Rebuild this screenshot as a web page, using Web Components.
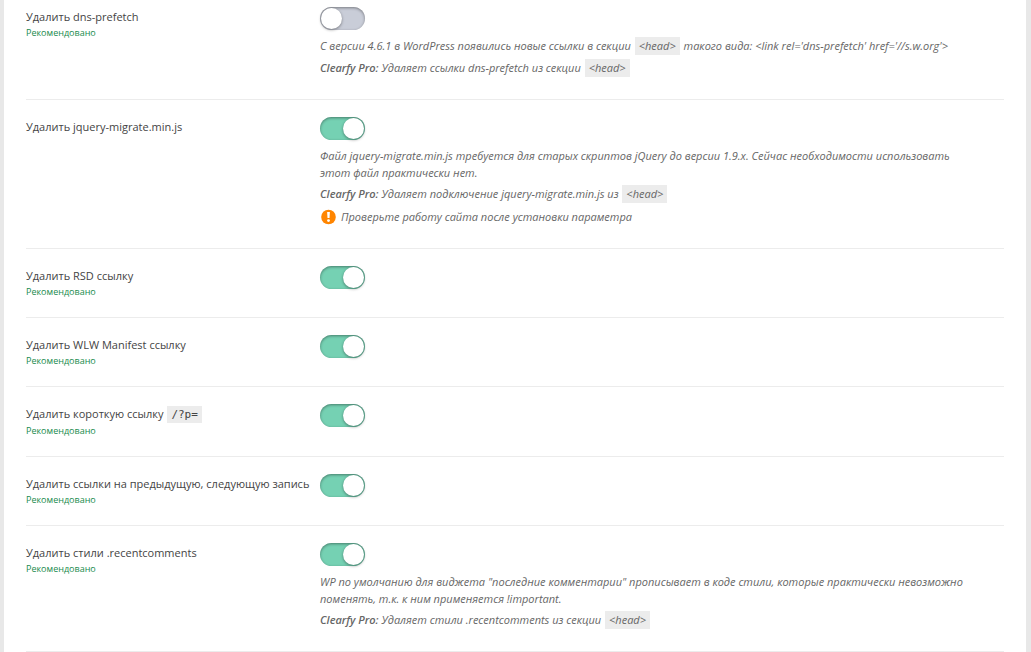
<!DOCTYPE html>
<html lang="ru">
<head>
<meta charset="utf-8">
<meta name="viewport" content="width=device-width, initial-scale=1">
<title>Clearfy Pro</title>
<style>
body {
  margin: 0;
  background: #e8e8e8;
  color: #444;
  font: 11px/17px "Open Sans", "Noto Sans", sans-serif;
}
</style>
</head>
<body>

<settings-panel>
  <setting-row class="first" recommended>
    <span slot="label">Удалить dns-prefetch</span>
    <setting-note>С версии 4.6.1 в WordPress появились новые ссылки в секции <code-chip>&lt;head&gt;</code-chip> такого вида: &lt;link rel='dns-prefetch' href='//s.w.org'&gt;</setting-note>
    <setting-note><b>Clearfy Pro:</b> Удаляет ссылки dns-prefetch из секции <code-chip>&lt;head&gt;</code-chip></setting-note>
  </setting-row>

  <setting-row checked>
    <span slot="label">Удалить jquery-migrate.min.js</span>
    <setting-note>Файл jquery-migrate.min.js требуется для старых скриптов jQuery до версии 1.9.x. Сейчас необходимости использовать этот файл практически нет.</setting-note>
    <setting-note><b>Clearfy Pro:</b> Удаляет подключение jquery-migrate.min.js из <code-chip>&lt;head&gt;</code-chip></setting-note>
    <setting-note warning>Проверьте работу сайта после установки параметра</setting-note>
  </setting-row>

  <setting-row checked recommended>
    <span slot="label">Удалить RSD ссылку</span>
  </setting-row>

  <setting-row checked recommended>
    <span slot="label">Удалить WLW Manifest ссылку</span>
  </setting-row>

  <setting-row checked recommended>
    <span slot="label">Удалить короткую ссылку <code-chip mono>/?p=</code-chip></span>
  </setting-row>

  <setting-row checked recommended>
    <span slot="label">Удалить ссылки на предыдущую, следующую запись</span>
  </setting-row>

  <setting-row checked recommended>
    <span slot="label">Удалить стили .recentcomments</span>
    <setting-note>WP по умолчанию для виджета "последние комментарии" прописывает в коде стили, которые практически невозможно поменять, т.к. к ним применяется !important.</setting-note>
    <setting-note><b>Clearfy Pro:</b> Удаляет стили .recentcomments из секции <code-chip>&lt;head&gt;</code-chip></setting-note>
  </setting-row>
</settings-panel>

<script>
// Attach an open shadow root with the given markup
function render(element, html) {
  const template = document.createElement('template');
  template.innerHTML = html;
  element.attachShadow({ mode: 'open' }).appendChild(template.content.cloneNode(true));
}


class SettingsPanel extends HTMLElement {
  constructor() {
    super();
    render(this, `
<style>
:host {
  display: block;
  box-sizing: border-box;
  min-height: 100vh;
  margin: 0 5px 0 4px;
  padding: 0 22px;
  background: #fff;
}

/* The first row sits closer to the top of the panel */
::slotted(.first) {
  --row-top: 7px;
}
</style>
<slot></slot>`);
  }
}
window.customElements.define('settings-panel', SettingsPanel);


class CodeChip extends HTMLElement {
  constructor() {
    super();
    render(this, `
<style>
:host {
  display: inline-block;
  margin: 0 1px;
  padding: 0 4px;
  background: #ececec;
  line-height: 18px;
}

code {
  font: inherit;
}

:host([mono]) {
  font-family: "DejaVu Sans Mono", monospace;
  line-height: 17px;
}
</style>
<code><slot></slot></code>`);
  }
}
window.customElements.define('code-chip', CodeChip);


class SettingNote extends HTMLElement {
  constructor() {
    super();
    render(this, `
<style>
:host {
  display: block;
  margin-bottom: 4px;
  color: #666;
  font-style: italic;
}

:host([warning]) {
  display: flex;
  align-items: center;
  gap: 4px;
  min-height: 19px;
}

svg {
  display: none;
  flex: none;
  margin-left: 1px;
}

:host([warning]) svg {
  display: block;
}

::slotted(b) {
  font-weight: 600;
}
</style>
<svg width="16" height="16" viewBox="0 0 16 16" aria-hidden="true">
  <circle cx="7.5" cy="8" r="7.3" fill="#ff8500"/>
  <path d="M6.1 3h2.8l-.4 6h-2z" fill="#fff"/>
  <circle cx="7.5" cy="11.6" r="1.4" fill="#fff"/>
</svg>
<div><slot></slot></div>`);
  }
}
window.customElements.define('setting-note', SettingNote);


class SettingRow extends HTMLElement {
  constructor() {
    super();
    render(this, `
<style>
:host {
  display: grid;
  grid-template-columns: 294px minmax(0, 1fr);
  padding: var(--row-top, 17px) 0 18px;
  border-bottom: 1px solid #ececec;
}

label {
  display: block;
  margin-top: 1px;
}

small {
  display: none;
  color: #178a4c;
  font-size: 9px;
  line-height: 15px;
}

:host([recommended]) small {
  display: block;
}

input {
  appearance: none;
  display: block;
  width: 45px;
  height: 23px;
  margin: 0;
  padding: 1px;
  border-radius: 12px;
  background: #c9cdd8;
  box-shadow: inset 0 1px 3px rgba(0, 0, 0, 0.4);
  cursor: pointer;
}

input::before {
  content: "";
  display: block;
  width: 21px;
  height: 21px;
  border-radius: 50%;
  background: #fff;
  box-shadow: 0 1px 3px rgba(0, 0, 0, 0.4);
}

input:checked {
  background: #75d1b3;
}

input:checked::before {
  margin-left: auto;
}

.notes {
  padding: 7px 26px 0 0;
}

.notes[hidden] {
  display: none;
}
</style>
<div>
  <label for="toggle"><slot name="label"></slot></label>
  <small>Рекомендовано</small>
</div>
<div>
  <input type="checkbox" role="switch" id="toggle">
  <div class="notes"><slot></slot></div>
</div>`);
  }

  connectedCallback() {
    this.shadowRoot.querySelector('input').checked = this.hasAttribute('checked');
    this.shadowRoot.querySelector('.notes').hidden = !this.querySelector('setting-note');
  }
}
window.customElements.define('setting-row', SettingRow);
</script>
</body>
</html>
